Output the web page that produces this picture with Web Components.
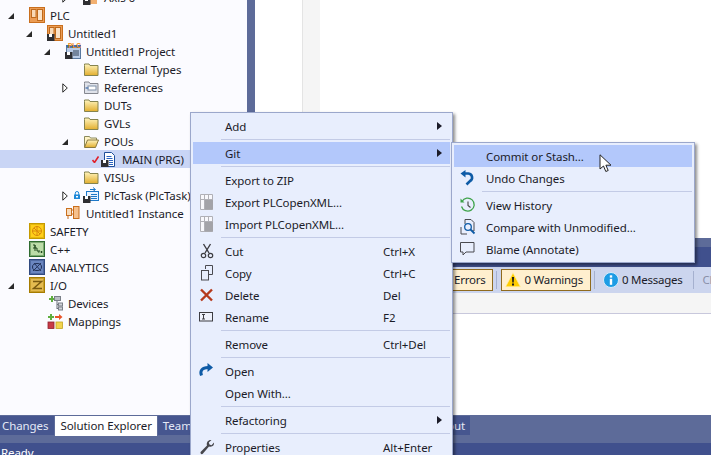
<!DOCTYPE html>
<html>
<head>
<meta charset="utf-8">
<title>Git menu</title>
<style>
html, body { margin: 0; height: 100%; overflow: hidden; background: #fff; }
body { font: 11.5px "Noto Sans", "Open Sans", sans-serif; letter-spacing: -0.08px; color: #1b1b28; }
</style>
</head>
<body>
<ide-window>
    <tree-panel slot="tree">
        <tree-row level="3" icon="axis" arrow="closed" label="Axis 6" style="margin-top:-12px"></tree-row>
        <tree-row level="0" icon="plc" arrow="open" label="PLC"></tree-row>
        <tree-row level="1" icon="untitled" arrow="open" label="Untitled1"></tree-row>
        <tree-row level="2" icon="project" arrow="open" label="Untitled1 Project"></tree-row>
        <tree-row level="3" icon="folder" label="External Types"></tree-row>
        <tree-row level="3" icon="refs" arrow="closed" label="References"></tree-row>
        <tree-row level="3" icon="folder" label="DUTs"></tree-row>
        <tree-row level="3" icon="folder" label="GVLs"></tree-row>
        <tree-row level="3" icon="folderopen" arrow="open" label="POUs"></tree-row>
        <tree-row level="4" icon="main" marker="check" label="MAIN (PRG)" selected></tree-row>
        <tree-row level="3" icon="folder" label="VISUs"></tree-row>
        <tree-row level="3" icon="task" arrow="closed" marker="lock" label="PlcTask (PlcTask)"></tree-row>
        <tree-row level="2" icon="instance" label="Untitled1 Instance"></tree-row>
        <tree-row level="0" icon="safety" label="SAFETY"></tree-row>
        <tree-row level="0" icon="cpp" label="C++"></tree-row>
        <tree-row level="0" icon="analytics" label="ANALYTICS"></tree-row>
        <tree-row level="0" icon="io" arrow="open" label="I/O"></tree-row>
        <tree-row level="1" icon="devices" label="Devices"></tree-row>
        <tree-row level="1" icon="mappings" label="Mappings"></tree-row>
    </tree-panel>
    <error-list slot="right">
        <tool-button active>0 Errors</tool-button>
        <tool-sep></tool-sep>
        <tool-button active icon="warn">0 Warnings</tool-button>
        <tool-sep></tool-sep>
        <tool-button icon="info">0 Messages</tool-button>
        <tool-sep></tool-sep>
        <tool-button muted>Clear</tool-button>
    </error-list>
    <tab-strip slot="tabs">
        <strip-tab first>Changes</strip-tab>
        <strip-tab selected>Solution Explorer</strip-tab>
        <strip-tab>Team Explorer</strip-tab>
        <strip-tab push>Output</strip-tab>
    </tab-strip>
    <span slot="status">Ready</span>
</ide-window>

<ctx-menu style="left:190px;top:112px;width:257px">
    <menu-item label="Add" arrow></menu-item>
    <menu-sep></menu-sep>
    <menu-item label="Git" arrow active></menu-item>
    <menu-sep></menu-sep>
    <menu-item label="Export to ZIP"></menu-item>
    <menu-item label="Export PLCopenXML..." icon="grid"></menu-item>
    <menu-item label="Import PLCopenXML..." icon="grid"></menu-item>
    <menu-sep></menu-sep>
    <menu-item label="Cut" icon="cut" shortcut="Ctrl+X"></menu-item>
    <menu-item label="Copy" icon="copy" shortcut="Ctrl+C"></menu-item>
    <menu-item label="Delete" icon="del" shortcut="Del"></menu-item>
    <menu-item label="Rename" icon="rename" shortcut="F2"></menu-item>
    <menu-sep></menu-sep>
    <menu-item label="Remove" shortcut="Ctrl+Del"></menu-item>
    <menu-sep></menu-sep>
    <menu-item label="Open" icon="open"></menu-item>
    <menu-item label="Open With..."></menu-item>
    <menu-sep></menu-sep>
    <menu-item label="Refactoring" arrow></menu-item>
    <menu-sep></menu-sep>
    <menu-item label="Properties" icon="wrench" shortcut="Alt+Enter"></menu-item>
</ctx-menu>

<ctx-menu style="left:451px;top:142px;width:238px">
    <menu-item label="Commit or Stash..." active></menu-item>
    <menu-item label="Undo Changes" icon="undo"></menu-item>
    <menu-sep></menu-sep>
    <menu-item label="View History" icon="history"></menu-item>
    <menu-item label="Compare with Unmodified..." icon="compare"></menu-item>
    <menu-item label="Blame (Annotate)" icon="blame"></menu-item>
</ctx-menu>

<mouse-cursor style="left:599px;top:154px"></mouse-cursor>

<script>
const overlay = '<rect x="0" y="9" width="7.5" height="7" fill="#2f2f33"/><rect x="2" y="9" width="3" height="3" fill="#fff"/>'
const folderGrad = '<defs><linearGradient id="fg" x1="0" y1="0" x2="0" y2="1"><stop offset="0" stop-color="#fff4bd"/><stop offset="1" stop-color="#e2ae2e"/></linearGradient></defs>'
const chip = '<rect x=".5" y=".5" width="15" height="15" fill="#eb9c55" stroke="#c96f1e"/><rect x="2.500" y="2.500" width="4.500" height="8" fill="#f9d9b6" stroke="#bf6a1c"/><rect x="8.500" y="2.500" width="5" height="11" fill="#fbe3c8" stroke="#bf6a1c"/>'
const bevel = (fill, edge) => `<rect x=".5" y=".5" width="15" height="15" fill="${fill}" stroke="${edge}"/><rect x="1.500" y="1.500" width="13" height="13" fill="none" stroke="${edge}" stroke-opacity=".45"/>`

const ICONS = {
    axis: '<rect x="3" y="1" width="11" height="14" fill="#f2b071"/>' + overlay,
    plc: chip,
    untitled: chip + overlay,
    project: '<rect x="1.500" y="4.500" width="14" height="11" fill="#b9cbe6" stroke="#59789f"/><rect x="1" y="2" width="15" height="2" fill="#3f6fb0"/><text x="3" y="5" font-size="6.500" font-weight="700" font-family="Liberation Sans" letter-spacing="0" fill="#f08a12">PLC</text><path d="M8 8h6M8 10h6M8 12h6" stroke="#2f3f55"/>' + overlay,
    folder: folderGrad + '<path d="M1.500 4.500v-1.500h4.500l1 1.500h8v10h-13.500z" fill="url(#fg)" stroke="#85834f"/>',
    folderopen: folderGrad + '<path d="M1.500 14V3.500h5l1 1.500h6v2" fill="#fff3c4" stroke="#8b8a5e"/><path d="M1.500 14.500l3-7.500h11l-3 7.500z" fill="url(#fg)" stroke="#8b7a3e"/>',
    refs: '<path d="M1.500 4.500v-1.500h4.500l1 1.500h8v10h-13.500z" fill="#dfe2ea" stroke="#85878f"/><rect x="5" y="7" width="8" height="4" fill="#fff" stroke="#7f8fa8"/><path d="M2.500 9h3" stroke="#5a7fb5" stroke-width="1.500"/>',
    main: '<path d="M3.500 1.500h7l3 3v11h-10z" fill="#fff" stroke="#1f4e9a"/><path d="M5.500 5.500h5M5.500 7.500h6M8 9.500h4M8 11.500h4M8 13.500h4" stroke="#2a62c0"/>' + overlay,
    task: '<rect x="3.500" y="4.500" width="12" height="9" fill="#eaf3ff" stroke="#1e78c8"/><path d="M7 2.500h5M10 .5l2.500 2L10 4.500" fill="none" stroke="#1e78c8"/><path d="M8 7.500h6M8 9.500h6M8 11.500h6" stroke="#1e78c8"/>' + overlay,
    instance: '<rect x="1.500" y="3.500" width="5" height="7" fill="#f8dcbd" stroke="#c96f1e"/><rect x="8.500" y="1.500" width="5.500" height="12" fill="#f6c08c" stroke="#c96f1e"/><path d="M6 5h3M6 9h3M3 10v4" stroke="#c96f1e"/>',
    safety: bevel('#ffcf1a', '#c59a00') + '<circle cx="8" cy="8" r="4.500" fill="none" stroke="#d9880c"/><path d="M8 3.500v9M3.500 8h9M5 5l6 6" stroke="#d9880c" fill="none"/>',
    cpp: bevel('#bcdca8', '#2f6b2f') + '<path d="M4 4h2v3h2v3h3M6 4v6M4 7h2" fill="none" stroke="#21491f"/><path d="M9 11h1.500M12.500 10v2M11.500 11h2" stroke="#21491f"/>',
    analytics: bevel('#6b86c0', '#30497f') + '<ellipse cx="8" cy="8" rx="4.500" ry="3.500" fill="none" stroke="#1f2f55"/><path d="M4 12l8-8M5 4l7 8" stroke="#27365f"/>',
    io: bevel('#e4bb50', '#a67c00') + '<path d="M4 4.500h8.500L4.500 11.500H13" fill="none" stroke="#7a5a10" stroke-width="1.500"/>',
    devices: '<path d="M2 3h2V1h2v2h2v2H6v2H4V5H2z" fill="#5fae3f"/><rect x="7.500" y="1.500" width="6" height="4" fill="#b9bdc4" stroke="#7a7f88"/><path d="M10 6v8M10 9.500h2M10 13.500h2" stroke="#6a6f78" fill="none"/><rect x="11.500" y="8" width="4" height="3" fill="#cfd2d8" stroke="#7a7f88"/><rect x="11.500" y="12" width="4" height="3" fill="#cfd2d8" stroke="#7a7f88"/>',
    mappings: '<path d="M1 3h2V1h2v2h2v2H5v2H3V5H1z" fill="#5fae3f"/><path d="M8 3h4V1l3.500 3L12 7V5H8z" fill="#e8552a"/><rect x="1" y="9" width="6" height="6.500" fill="#c83a45" stroke="#8f2230" stroke-width=".8"/><rect x="9" y="9" width="6.500" height="6.500" fill="#f2d44e" stroke="#c4a520" stroke-width=".8"/>',
    grid: '<path d="M1.500 .5h12v15h-12z" fill="#f8f8fc" stroke="#b0b0b6"/><path d="M1.500 5.500h12M5.500 .5v15M9.500 .5v5" stroke="#b0b0b6"/><rect x="6" y="6" width="8" height="9.500" fill="#a3a3a8"/>',
    cut: '<path d="M4.500 1l5.500 9M11.500 1L6 10" stroke="#3d3d42" stroke-width="1.400" fill="none"/><circle cx="4.500" cy="12.500" r="2.200" fill="none" stroke="#3d3d42" stroke-width="1.200"/><circle cx="11.500" cy="12.500" r="2.200" fill="none" stroke="#3d3d42" stroke-width="1.200"/>',
    copy: '<path d="M6.500 4V.5h7v9H10" fill="none" stroke="#4a4a50"/><rect x="2.500" y="5.500" width="7" height="9.500" fill="none" stroke="#4a4a50"/>',
    del: '<path d="M2 2.500l11 11M13 2.500l-11 11" stroke="#b5391c" stroke-width="2.400"/>',
    rename: '<rect x=".5" y="3.500" width="13" height="8.500" fill="#eef1fb" stroke="#3d3d42"/><path d="M3 5.500h3M3 10h3M4.500 5.500v4.500" stroke="#3d3d42" fill="none"/>',
    open: '<path d="M2.500 12.500C.5 7.500 3.500 4.500 9 4.500" fill="none" stroke="#0e5ba6" stroke-width="3"/><path d="M8.500 0l5.500 4.500l-5.500 4.500z" fill="#0e5ba6"/>',
    wrench: '<path d="M15 3.500c.5 2.500-1.500 5-5 4L3.800 14.800c-1.200 1.200-3.200-.6-2-2L8 6.500C7 3 9.500.5 12.500 1L9.800 3.500l.7 2 2 .7z" fill="#47474c"/>',
    undo: '<path d="M4 3.500h4.500a4 4 0 0 1 1.500 7.500L6.500 14.500" fill="none" stroke="#0e5ba6" stroke-width="2.600"/><path d="M5.500 0v7.500L.5 3.500z" fill="#0e5ba6"/>',
    history: '<path d="M2 4.500A6.500 6.500 0 1 1 1.500 9.500" fill="none" stroke="#3ea34a" stroke-width="1.300"/><path d="M.5 1.500v4h4z" fill="#3ea34a"/><path d="M8 4.500v4l2.500 2" fill="none" stroke="#444" stroke-width="1.100"/>',
    compare: '<path d="M5 5V.5h6l3 3V12h-2" fill="none" stroke="#4a4a50"/><path d="M1 8v7h6" fill="none" stroke="#4a4a50"/><circle cx="8" cy="8" r="3.300" fill="none" stroke="#0e5ba6" stroke-width="1.300"/><path d="M10.500 10.500l4 4" stroke="#0e5ba6" stroke-width="1.800"/>',
    blame: '<path d="M.5 1.500h13.500v9.500H6L3 14v-3H.5z" fill="none" stroke="#4a4a50"/>',
    warn: '<path d="M8 .8l7.500 14H.5z" fill="#ffcc00" stroke="#fff3b0" stroke-width=".7"/><path d="M7 5h2l-.3 5.500H7.300zM7 11.500h2v2H7z" fill="#1c1c1c"/>',
    info: '<circle cx="8" cy="8" r="7.500" fill="#1d9ce5" stroke="#d7ecfa"/><rect x="6.800" y="6.800" width="2.400" height="6" fill="#fff"/><rect x="6.800" y="3.300" width="2.400" height="2.300" fill="#fff"/>'
}

function svg(name, size = 16) {
    return `<svg width="${size}" height="${size}" viewBox="0 0 16 16" style="display:block;overflow:visible">${ICONS[name] || ''}</svg>`
}

class IdeWindow extends HTMLElement {
    constructor() {
        super()
        this.attachShadow({ mode: "open" }).innerHTML = `<style>
        :host{ display:grid; grid-template-rows:415px 28px 12px; width:711px; height:455px; overflow:hidden; }
        .top{ display:flex; min-height:0; }
        .split{ width:8px; background:#5d6b99; flex:none; }
        .right{ flex:1; min-width:0; }
        .tabs{ background:#5d6b99; padding-top:1px; }
        .status{ background:#40508d; color:#fff; padding:2px 0 0 1px; line-height:16px; overflow:hidden; }
        </style>
        <div class="top">
            <slot name="tree"></slot>
            <div class="split"></div>
            <div class="right"><slot name="right"></slot></div>
        </div>
        <div class="tabs"><slot name="tabs"></slot></div>
        <div class="status"><slot name="status"></slot></div>`
    }
}
customElements.define('ide-window', IdeWindow)

class TreePanel extends HTMLElement {
    constructor() {
        super()
        this.attachShadow({ mode: "open" }).innerHTML = `<style>
        :host{ display:block; width:247px; flex:none; background:#fbfbff; overflow:hidden; }
        </style><slot></slot>`
    }
}
customElements.define('tree-panel', TreePanel)

class TreeRow extends HTMLElement {
    constructor() {
        super()
        this.shadow = this.attachShadow({ mode: "open" })
    }
    connectedCallback() {
        const level = Number(this.getAttribute('level') || 0)
        const arrow = this.getAttribute('arrow')
        const marker = this.getAttribute('marker')
        let arrowSvg = ''
        if (arrow == 'open') arrowSvg = '<svg width="6" height="6" viewBox="0 0 6 6"><path d="M6 0v6H0z" fill="#2a2a2a"/></svg>'
        if (arrow == 'closed') arrowSvg = '<svg width="6" height="10" viewBox="0 0 6 10"><path d="M.8 .8l4.500 4.200l-4.500 4.200z" fill="#fff" stroke="#2a2a2a"/></svg>'
        let markerSvg = ''
        if (marker == 'check') markerSvg = '<svg width="7" height="7" viewBox="0 0 7 7"><path d="M.5 4l2 2.500L6.500.5" fill="none" stroke="#e0202a" stroke-width="1.600"/></svg>'
        if (marker == 'lock') markerSvg = '<svg width="6" height="8" viewBox="0 0 6 8" style="margin-right:1px"><path d="M1.300 4V2.200a1.700 1.700 0 0 1 3.400 0V4" fill="none" stroke="#1e88d8"/><rect y="3.500" width="6" height="4.500" fill="#1e88d8"/><rect x="2" y="5" width="2" height="1.500" fill="#fff"/></svg>'
        this.shadow.innerHTML = `<style>
        :host{ display:flex; align-items:center; height:18px; white-space:nowrap; padding-left:${8 + level * 18}px; ${this.hasAttribute('selected') ? 'background:#c9d5f5;' : ''} }
        .exp{ width:7px; height:18px; flex:none; display:flex; align-items:center; padding-top:1px; box-sizing:border-box; }
        .mark{ width:14px; height:18px; flex:none; display:flex; align-items:center; justify-content:flex-end; padding-right:2px; box-sizing:border-box; }
        .icon{ width:16px; flex:none; margin-right:5px; }
        </style>
        <span class="exp">${arrowSvg}</span>
        <span class="mark">${markerSvg}</span>
        <span class="icon">${svg(this.getAttribute('icon'))}</span>
        <span>${this.getAttribute('label')}</span>`
    }
}
customElements.define('tree-row', TreeRow)

class ErrorList extends HTMLElement {
    constructor() {
        super()
        this.attachShadow({ mode: "open" }).innerHTML = `<style>
        :host{ display:flex; flex-direction:column; height:100%; }
        .editor{ flex:1; display:flex; background:#fff; }
        .gutter{ width:18px; margin-left:47px; background:#f5f5f5; border-left:1px solid #e4e4e4; box-sizing:border-box; }
        .split{ height:9px; background:#5d6b99; flex:none; }
        .title{ height:20px; background:#40508d; flex:none; }
        .tools{ height:26px; background:#ccd5ee; flex:none; display:flex; align-items:center; padding-left:186px; overflow:hidden; }
        .head{ height:20px; background:#f5f5f5; flex:none; border-bottom:1px solid #c8c8dc; }
        .rows{ height:101px; background:#fff; flex:none; }
        </style>
        <div class="editor"><div class="gutter"></div></div>
        <div class="split"></div>
        <div class="title"></div>
        <div class="tools"><slot></slot></div>
        <div class="head"></div>
        <div class="rows"></div>`
    }
}
customElements.define('error-list', ErrorList)

class ToolButton extends HTMLElement {
    constructor() {
        super()
        this.shadow = this.attachShadow({ mode: "open" })
    }
    connectedCallback() {
        const icon = this.getAttribute('icon')
        this.shadow.innerHTML = `<style>
        :host{ display:flex; align-items:center; gap:3px; height:22px; box-sizing:border-box; flex:none; white-space:nowrap; padding:0 7px 1px 3px; letter-spacing:-0.25px;
            border:1px solid transparent; ${this.hasAttribute('muted') ? 'color:#8a8fa8;' : ''}
            ${this.hasAttribute('active') ? 'background:#ffefce;border-color:#8f6a1e;' : ''} }
        </style>
        ${icon ? svg(icon) : ''}<slot></slot>`
    }
}
customElements.define('tool-button', ToolButton)

class ToolSep extends HTMLElement {
    constructor() {
        super()
        this.attachShadow({ mode: "open" }).innerHTML = `<style>
        :host{ display:block; width:1px; height:18px; background:#a5b0cf; margin:0 4px 0 3px; flex:none; }
        </style>`
    }
}
customElements.define('tool-sep', ToolSep)

class TabStrip extends HTMLElement {
    constructor() {
        super()
        this.attachShadow({ mode: "open" }).innerHTML = `<style>
        :host{ display:flex; gap:1px; width:470px; align-items:flex-start; }
        </style><slot></slot>`
    }
}
customElements.define('tab-strip', TabStrip)

class StripTab extends HTMLElement {
    constructor() {
        super()
        this.shadow = this.attachShadow({ mode: "open" })
    }
    connectedCallback() {
        const on = this.hasAttribute('selected')
        const first = this.hasAttribute('first')
        this.shadow.innerHTML = `<style>
        :host{ display:block; height:${on ? 20 : 19}px; line-height:19px; padding:0 ${first ? 6 : 5}px 0 ${first ? 2 : 5}px; white-space:nowrap;
            background:${on ? '#fff' : '#46568f'}; color:${on ? '#1b1b28' : '#e4e9f6'}; ${this.hasAttribute('push') ? 'margin-left:auto;' : ''} }
        </style><slot></slot>`
    }
}
customElements.define('strip-tab', StripTab)

class CtxMenu extends HTMLElement {
    constructor() {
        super()
        this.attachShadow({ mode: "open" }).innerHTML = `<style>
        :host{ position:absolute; display:block; background:#e8eefd; border:1px solid #9ba7cb; padding:2px; box-shadow:2px 2px 3px rgba(0,0,0,.45); }
        </style><slot></slot>`
    }
}
customElements.define('ctx-menu', CtxMenu)

class MenuItem extends HTMLElement {
    constructor() {
        super()
        this.shadow = this.attachShadow({ mode: "open" })
    }
    connectedCallback() {
        const icon = this.getAttribute('icon')
        const shortcut = this.getAttribute('shortcut') || ''
        this.shadow.innerHTML = `<style>
        :host{ display:grid; grid-template-columns:32px 158px 1fr 13px; align-items:center; height:22px; white-space:nowrap; ${this.hasAttribute('active') ? 'background:#b3c8fb;' : ''} }
        .ic{ padding-left:6px; }
        </style>
        <span class="ic">${icon ? svg(icon) : ''}</span>
        <span>${this.getAttribute('label')}</span>
        <span>${shortcut}</span>
        <span>${this.hasAttribute('arrow') ? '<svg width="5" height="8" viewBox="0 0 5 8" style="display:block"><path d="M0 0l5 4l-5 4z" fill="#1b1b28"/></svg>' : ''}</span>`
    }
}
customElements.define('menu-item', MenuItem)

class MenuSep extends HTMLElement {
    constructor() {
        super()
        this.attachShadow({ mode: "open" }).innerHTML = `<style>
        :host{ display:block; height:5px; padding:2px 0 0 28px; box-sizing:border-box; }
        div{ height:1px; background:#c3cbe6; }
        </style><div></div>`
    }
}
customElements.define('menu-sep', MenuSep)

class MouseCursor extends HTMLElement {
    constructor() {
        super()
        this.attachShadow({ mode: "open" }).innerHTML = `<style>
        :host{ position:absolute; display:block; width:14px; height:20px; }
        </style>
        <svg width="14" height="20" viewBox="0 0 14 20"><path d="M1 .8V15l3.500-3 2.300 5.500 2.400-1-2.300-5.300H12z" fill="#fff" stroke="#222"/></svg>`
    }
}
customElements.define('mouse-cursor', MouseCursor)
</script>
</body>
</html>
